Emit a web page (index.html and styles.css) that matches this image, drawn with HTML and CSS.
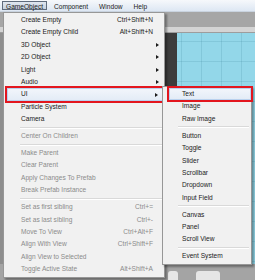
FILE: index.html
```html
<!DOCTYPE html>
<html lang="en">
<head>
    <meta charset="UTF-8">
    <title>GameObject menu</title>
    <link rel="stylesheet" href="styles.css">
</head>
<body>
    <div class="menubar">
        <span class="bar-item open">GameObject</span>
        <span class="bar-item">Component</span>
        <span class="bar-item">Window</span>
        <span class="bar-item">Help</span>
    </div>

    <div class="editor">
        <div class="toolbar"></div>
        <div class="tabs"></div>
        <div class="views">
            <div class="hierarchy"></div>
            <div class="gutter"></div>
            <div class="scene"></div>
        </div>
        <div class="bottom">
            <span class="blob blob-a"></span>
            <span class="blob blob-b"></span>
        </div>
    </div>

    <!-- main dropdown -->
    <div class="menu main-menu">
        <div class="row"><span class="label">Create Empty</span><span class="key">Ctrl+Shift+N</span><span class="arrow-cell"></span></div>
        <div class="row"><span class="label">Create Empty Child</span><span class="key">Alt+Shift+N</span><span class="arrow-cell"></span></div>
        <div class="row"><span class="label">3D Object</span><span class="arrow-cell"><i class="arrow"></i></span></div>
        <div class="row"><span class="label">2D Object</span><span class="arrow-cell"><i class="arrow"></i></span></div>
        <div class="row"><span class="label">Light</span><span class="arrow-cell"><i class="arrow"></i></span></div>
        <div class="row"><span class="label">Audio</span><span class="arrow-cell"><i class="arrow"></i></span></div>
        <div class="row hl marked"><span class="label">UI</span><span class="arrow-cell"><i class="arrow"></i></span></div>
        <div class="row"><span class="label">Particle System</span><span class="arrow-cell"></span></div>
        <div class="row"><span class="label">Camera</span><span class="arrow-cell"></span></div>
        <div class="sep"></div>
        <div class="row off"><span class="label">Center On Children</span><span class="arrow-cell"></span></div>
        <div class="sep"></div>
        <div class="row off"><span class="label">Make Parent</span><span class="arrow-cell"></span></div>
        <div class="row off"><span class="label">Clear Parent</span><span class="arrow-cell"></span></div>
        <div class="row off"><span class="label">Apply Changes To Prefab</span><span class="arrow-cell"></span></div>
        <div class="row off"><span class="label">Break Prefab Instance</span><span class="arrow-cell"></span></div>
        <div class="sep"></div>
        <div class="row off"><span class="label">Set as first sibling</span><span class="key">Ctrl+=</span><span class="arrow-cell"></span></div>
        <div class="row off"><span class="label">Set as last sibling</span><span class="key">Ctrl+-</span><span class="arrow-cell"></span></div>
        <div class="row off"><span class="label">Move To View</span><span class="key">Ctrl+Alt+F</span><span class="arrow-cell"></span></div>
        <div class="row off"><span class="label">Align With View</span><span class="key">Ctrl+Shift+F</span><span class="arrow-cell"></span></div>
        <div class="row off"><span class="label">Align View to Selected</span><span class="arrow-cell"></span></div>
        <div class="row off"><span class="label">Toggle Active State</span><span class="key">Alt+Shift+A</span><span class="arrow-cell"></span></div>
    </div>

    <!-- UI submenu -->
    <div class="menu sub-menu">
        <div class="row hl marked"><span class="label">Text</span></div>
        <div class="row"><span class="label">Image</span></div>
        <div class="row"><span class="label">Raw Image</span></div>
        <div class="sep"></div>
        <div class="row"><span class="label">Button</span></div>
        <div class="row"><span class="label">Toggle</span></div>
        <div class="row"><span class="label">Slider</span></div>
        <div class="row"><span class="label">Scrollbar</span></div>
        <div class="row"><span class="label">Dropdown</span></div>
        <div class="row"><span class="label">Input Field</span></div>
        <div class="sep"></div>
        <div class="row"><span class="label">Canvas</span></div>
        <div class="row"><span class="label">Panel</span></div>
        <div class="row"><span class="label">Scroll View</span></div>
        <div class="sep"></div>
        <div class="row"><span class="label">Event System</span></div>
    </div>
</body>
</html>
```

FILE: styles.css
```css
body {
    margin: 0;
    width: 255px;
    height: 280px;
    overflow: hidden;
    position: relative;
    display: flex;
    flex-direction: column;
    font-family: "Liberation Sans", Arial, sans-serif;
    font-size: 6.6px;
    color: #1b1b1b;
    background: #9a9a9a;
}

/* top menu bar */
.menubar {
    height: 12px;
    display: flex;
    align-items: center;
    gap: 3px;
    padding-left: 2px;
    background: linear-gradient(to bottom, #f6f8fb, #dde7f3);
    border-bottom: 1px solid #c9d3df;
    box-sizing: border-box;
}
.bar-item {
    padding: 0 3px;
    height: 9px;
    line-height: 9px;
    border: 1px solid transparent;
    box-sizing: border-box;
}
.bar-item.open {
    border-color: #5f6b7c;
    background: linear-gradient(to bottom, #dfe6ef, #c6d2e0);
}

/* editor behind the menus */
.editor {
    flex: 1;
    display: grid;
    grid-template-rows: 15px 6px 1fr 16px;
}
.toolbar {
    background: #a6a6a6;
}
.tabs {
    background: #d4d4d4;
    border-bottom: 1px solid #9d9d9d;
}
.views {
    display: flex;
}
.hierarchy {
    width: 165px;
    background: #8e8e8e;
}
.gutter {
    width: 12px;
    background: #3c3c3c;
}
.scene {
    flex: 1;
    background-color: #93d7e9;
    background-image:
        linear-gradient(to right, rgba(60, 130, 150, 0.18) 1px, transparent 1px),
        linear-gradient(to bottom, rgba(60, 130, 150, 0.18) 1px, transparent 1px);
    background-size: 20px 20px;
    background-position: 4px 8px;
}
.bottom {
    background: #a4a4a4;
    display: flex;
    align-items: flex-end;
    padding-left: 168px;
    gap: 18px;
}
.blob {
    background: #e6e6e6;
    border-radius: 3px 3px 0 0;
    height: 9px;
}
.blob-a { width: 10px; }
.blob-b { width: 24px; }

/* dropdown menus */
.menu {
    position: absolute;
    background: #f1f1f1;
    border: 1px solid #979797;
    padding: 1px 0 1px;
    box-shadow: 2px 2px 2px rgba(0, 0, 0, 0.35);
}
.main-menu {
    left: 3px;
    top: 12px;
    width: 160px;
}
.sub-menu {
    left: 162px;
    top: 86px;
    width: 88px;
}
.row {
    display: flex;
    align-items: center;
    height: 12.4px;
    line-height: 12.4px;
    white-space: nowrap;
}
.main-menu .row {
    padding-left: 17px;
}
.sub-menu .row {
    padding-left: 19px;
}
.row .label {
    flex: 1;
}
.row.off {
    color: #8b8b8b;
}
.key {
    text-align: right;
}
.arrow-cell {
    width: 11px;
    display: flex;
    align-items: center;
}
.arrow {
    margin-left: 3px;
    width: 0;
    height: 0;
    border-left: 3px solid #1b1b1b;
    border-top: 2.5px solid transparent;
    border-bottom: 2.5px solid transparent;
}

/* highlighted row with the red annotation box */
.row.hl {
    background: linear-gradient(to bottom, #f3f6fb, #e2ebf6);
    box-shadow: inset 0 0 0 1px #b9d1ee;
}
.row.marked {
    outline: 2px solid #e3161e;
}
.main-menu .row.hl {
    margin: 0 1px 0 3px;
    padding-left: 14px;
}
.sub-menu .row.hl {
    margin: 0 0 0 6px;
    padding-left: 13px;
}

.sep {
    height: 4.6px;
    display: flex;
    align-items: center;
}
.sep::before {
    content: "";
    flex: 1;
    height: 0;
    border-top: 1px solid #d9d9d9;
    border-bottom: 1px solid #ffffff;
}
.main-menu .sep {
    margin-left: 16px;
}
.sub-menu .sep {
    margin-left: 15px;
    margin-right: 2px;
}
```
